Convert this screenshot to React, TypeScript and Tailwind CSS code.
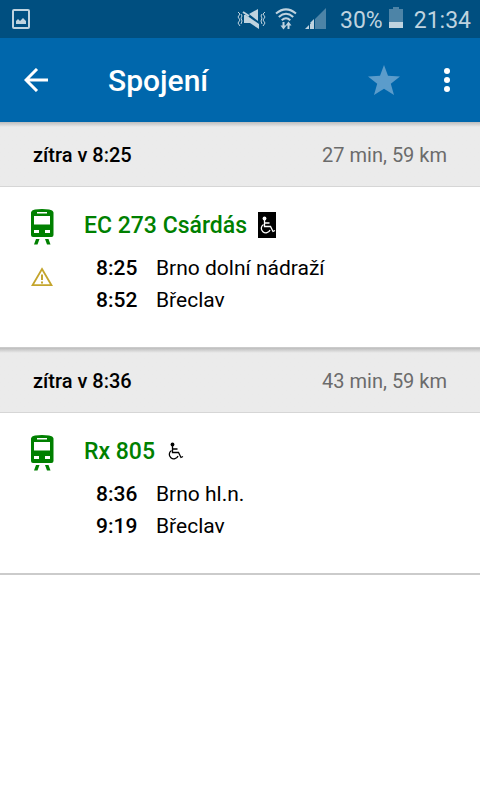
interface Stop {
  time: string;
  name: string;
}

interface Connection {
  departure: string;
  summary: string;
  train: string;
  invertedBadge: boolean;
  warning: boolean;
  stops: Stop[];
}

const connections: Connection[] = [
  {
    departure: 'zítra v 8:25',
    summary: '27 min, 59 km',
    train: 'EC 273 Csárdás',
    invertedBadge: true,
    warning: true,
    stops: [
      { time: '8:25', name: 'Brno dolní nádraží' },
      { time: '8:52', name: 'Břeclav' },
    ],
  },
  {
    departure: 'zítra v 8:36',
    summary: '43 min, 59 km',
    train: 'Rx 805',
    invertedBadge: false,
    warning: false,
    stops: [
      { time: '8:36', name: 'Brno hl.n.' },
      { time: '9:19', name: 'Břeclav' },
    ],
  },
];

function PictureIcon() {
  return (
    <svg width="18" height="20" viewBox="0 0 18 20" fill="none" aria-hidden="true">
      <rect x="1" y="1" width="16" height="18" rx="1" stroke="currentColor" strokeWidth="2" />
      <path d="M4 15v-3l2-2 2 2 3-3 3 3v3z" fill="currentColor" />
    </svg>
  );
}

function MutedIcon() {
  return (
    <svg width="30" height="22" viewBox="0 0 30 22" fill="none" aria-hidden="true">
      <path d="M12 6l9-5v12zM7 7h2l13 9v5l-9-6H7z" fill="currentColor" />
      <path
        d="M1 4l2 2-2 3 2 3-2 3 2 3M4 6l1 2-1 2 1 3-1 3M25 6l-1 2 1 2-1 3 1 3M28 4l-2 2 2 3-2 3 2 3-2 3"
        stroke="currentColor"
        strokeWidth="1"
      />
      <path d="M6 4l6 4" stroke="currentColor" strokeWidth="2" />
    </svg>
  );
}

function WifiIcon() {
  return (
    <svg width="22" height="22" viewBox="0 0 22 22" fill="none" stroke="currentColor" aria-hidden="true">
      <path d="M1 5.500Q11-2.800 21 5.500M3.800 9Q11 2.600 18.200 9M6.700 12.200Q11 8.200 15.300 12.200" strokeWidth="2" />
      <path d="M8.500 14v5M13.500 21v-5" strokeWidth="2" />
      <path d="M5.500 17.500h6l-3 4zM10.500 17.500h6l-3-4z" fill="currentColor" stroke="none" />
    </svg>
  );
}

function SignalIcon() {
  return (
    <svg width="21" height="21" viewBox="0 0 21 21" aria-hidden="true">
      <path d="M10 11L21 0v21H10z" fill="#4d84a7" />
      <path d="M0 21l4-4v4zM5 16l3-3v8H5zM6 15h-1l4-4h0v10H6z" fill="currentColor" />
    </svg>
  );
}

function BatteryIcon() {
  return (
    <svg width="14" height="21" viewBox="0 0 14 21" aria-hidden="true">
      <path d="M4 0h6v2h4v13H0V2h4z" fill="#4d84a7" />
      <path d="M0 15h14v6H0z" fill="currentColor" />
    </svg>
  );
}

function TrainIcon() {
  return (
    <svg width="24" height="36" viewBox="0 0 24 36" aria-hidden="true">
      <path
        fillRule="evenodd"
        fill="#008000"
        d="M5 .5Q12-.5 19 .5q4 .5 4.500 3v22.500q0 2-2 2h-18.500q-2 0-2-2V3.500Q1.500 1 5 .5zM7 3v1.500h10V3zM4 7v8.500h16V7zM4 21v3h5v-3zM15 21v3h5v-3z"
      />
      <path d="M6 30h3.500l-2 5.500H4zM15 30h3.500l2 5.500H17z" fill="#008000" />
    </svg>
  );
}

function WarningIcon() {
  return (
    <svg width="22" height="20" viewBox="0 0 22 20" fill="none" aria-label="Upozornění">
      <path d="M11 2L20.500 18.200H1.500z" stroke="#c4a52d" strokeWidth="1.800" />
      <path d="M11 7.500v5.500M11 14.500v2" stroke="#c4a52d" strokeWidth="2" />
    </svg>
  );
}

function WheelchairIcon({ inverted }: { inverted: boolean }) {
  return (
    <svg
      width="18"
      height="26"
      viewBox="0 0 18 26"
      fill="none"
      className={inverted ? 'bg-black text-white' : 'text-black'}
      aria-label="Bezbariérový vůz"
    >
      <circle cx="6.500" cy="6.500" r="1.900" fill="currentColor" />
      <path d="M6.500 7v7.500h6l2.500 5 2-1M7 11h4.500" stroke="currentColor" strokeWidth="1.300" />
      <path d="M5.500 12.500a4.500 4.500 0 1 0 6.500 5.500" stroke="currentColor" strokeWidth="1.300" />
    </svg>
  );
}

function ConnectionCard({ connection }: { connection: Connection }) {
  return (
    <li>
      <div className="flex h-[65px] items-center justify-between border-b border-[#d6d6d6] bg-linear-to-b from-[#bdbdbd] to-[#ebebeb] to-[5px] px-[33px] pt-0.5 text-xl">
        <h2 className="font-medium">{connection.departure}</h2>
        <span className="text-[#6b6b6b]">{connection.summary}</span>
      </div>
      <div className="flex pt-[22px] pb-[31px] pl-[30px]">
        <div className="flex w-6 flex-col items-center gap-[22px]">
          <TrainIcon />
          {connection.warning && <WarningIcon />}
        </div>
        <div className="ml-[30px]">
          <div className="flex h-8 items-center gap-[11px]">
            <h3 className="pt-0.5 text-[23px] font-medium text-[#008000]">{connection.train}</h3>
            <WheelchairIcon inverted={connection.invertedBadge} />
          </div>
          <ul className="mt-[11px] pl-3 text-[21px] leading-8">
            {connection.stops.map(stop => (
              <li key={stop.time} className="flex">
                <span className="w-[60px] font-medium">{stop.time}</span>
                <span>{stop.name}</span>
              </li>
            ))}
          </ul>
        </div>
      </div>
    </li>
  );
}

export default function App() {
  return (
    <div className="min-h-screen bg-white font-[Roboto,sans-serif] text-black">
      {/* Status bar */}
      <div className="flex h-[38px] items-center justify-between bg-[#004f80] pr-[9px] pl-3 text-[23px] text-[#bfd3df]">
        <PictureIcon />
        <div className="flex items-center">
          <MutedIcon />
          <span className="ml-2"><WifiIcon /></span>
          <span className="ml-2 pb-0.5"><SignalIcon /></span>
          <span className="ml-[14px] pt-1">30%</span>
          <span className="ml-[6px] pb-1"><BatteryIcon /></span>
          <span className="ml-[11px] pt-1">21:34</span>
        </div>
      </div>

      {/* App bar */}
      <header className="flex h-[84px] items-center bg-[#0067ac] px-6 text-white">
        <button type="button" aria-label="Zpět">
          <svg width="24" height="24" viewBox="0 0 24 24" fill="none" stroke="currentColor" strokeWidth="3" aria-hidden="true">
            <path d="M24 12H2M13 1L2 12l11 11" />
          </svg>
        </button>
        <h1 className="ml-[60px] flex-1 text-[30px] font-medium">Spojení</h1>
        <button type="button" aria-label="Oblíbené">
          <svg width="32" height="30" viewBox="0 0 32 30" aria-hidden="true">
            <path d="M16 0l4 10.700 12 .8-9.200 7.300L26 30l-10-6.300L6 30l3.200-11.200L0 11.500l12-.8z" fill="#5b9ccb" />
          </svg>
        </button>
        <button type="button" aria-label="Další možnosti" className="ml-[38px]">
          <svg width="18" height="24" viewBox="0 0 18 24" fill="currentColor" aria-hidden="true">
            <circle cx="9" cy="3" r="3" />
            <circle cx="9" cy="12" r="3" />
            <circle cx="9" cy="21" r="3" />
          </svg>
        </button>
      </header>

      {/* Connections */}
      <ul className="divide-y divide-[#cbcbcb] border-b-2 border-[#cbcbcb]">
        {connections.map(connection => (
          <ConnectionCard key={connection.train} connection={connection} />
        ))}
      </ul>
    </div>
  );
}
